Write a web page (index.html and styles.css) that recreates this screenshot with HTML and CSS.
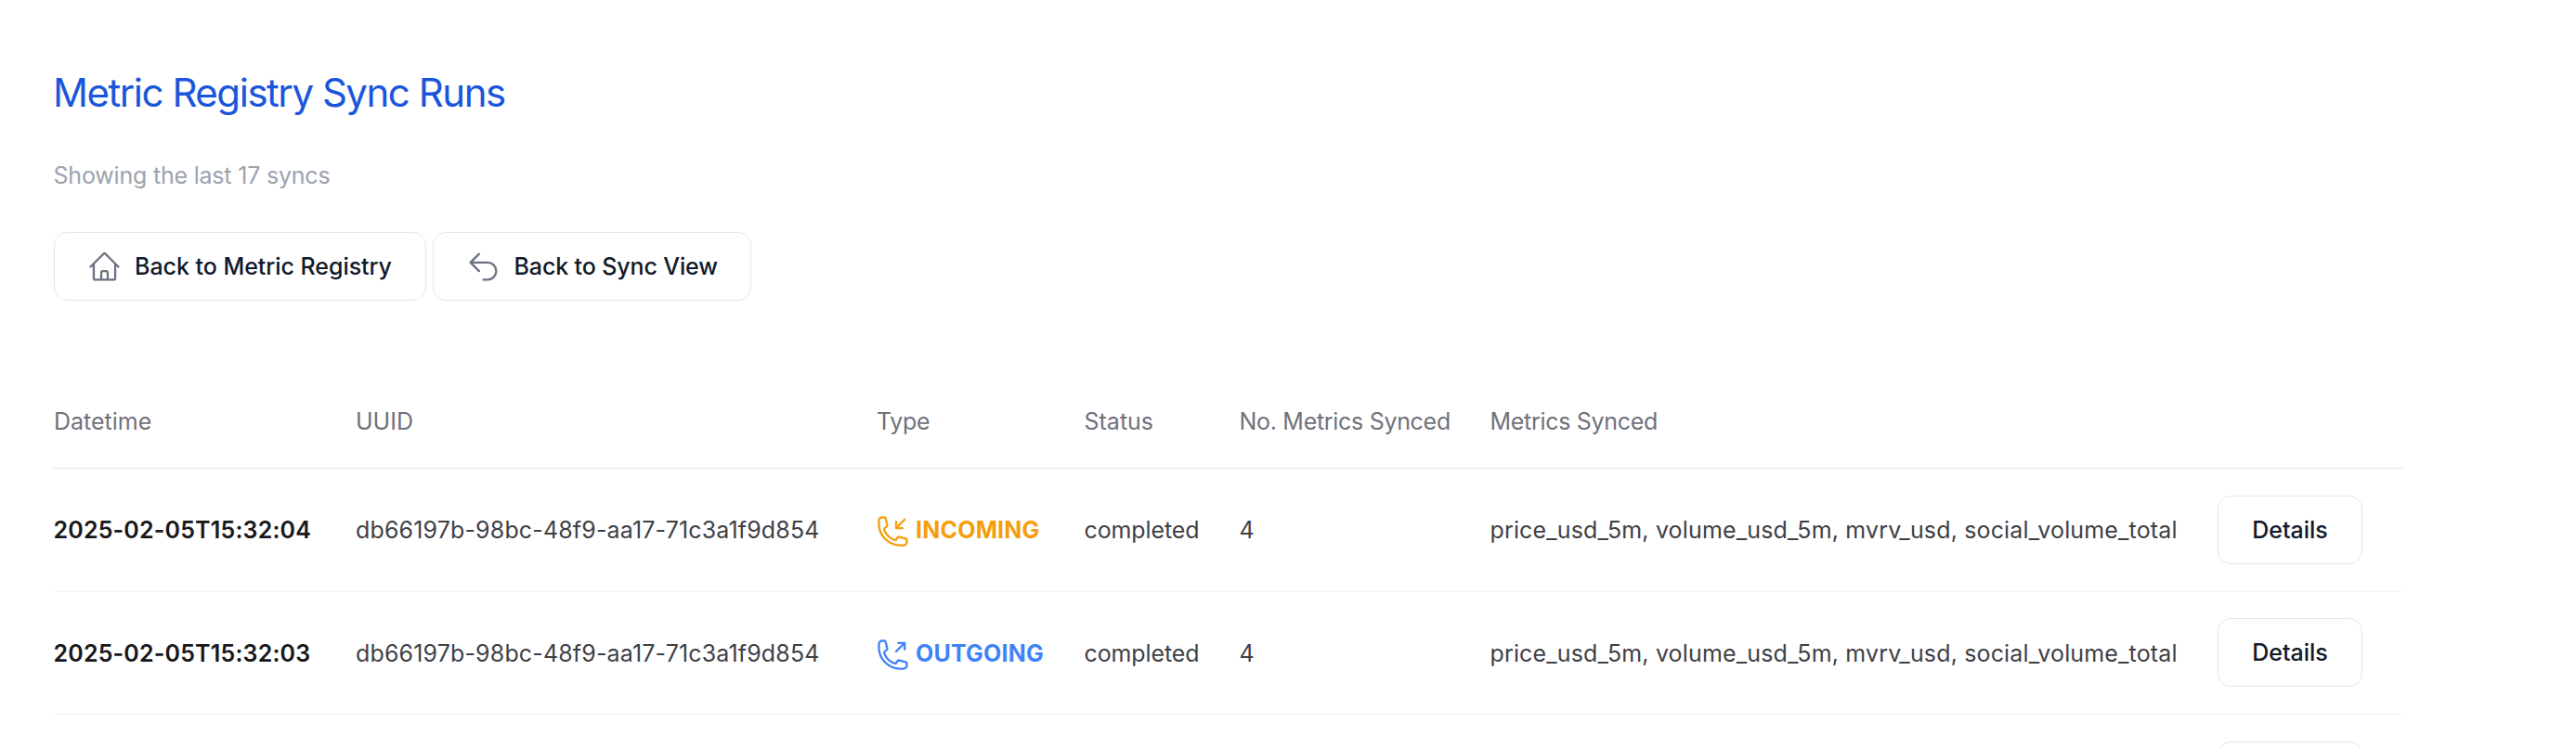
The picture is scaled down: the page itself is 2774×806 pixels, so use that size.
FILE: index.html
```
<!DOCTYPE html>
<html lang="en">
<head>
<meta charset="utf-8">
<title>Metric Registry Sync Runs</title>
<link rel="stylesheet" href="styles.css">
</head>
<body>
<main class="page">
  <h1 class="title">Metric Registry Sync Runs</h1>
  <p class="subtitle">Showing the last 17 syncs</p>
  <nav class="actions">
    <a class="btn btn-home">
      <svg class="icon" viewBox="0 0 24 24"><path d="m2.25 12 8.954-8.955c.44-.439 1.152-.439 1.591 0L21.75 12M4.5 9.75v10.125c0 .621.504 1.125 1.125 1.125H9.75v-4.875c0-.621.504-1.125 1.125-1.125h2.25c.621 0 1.125.504 1.125 1.125V21h4.125c.621 0 1.125-.504 1.125-1.125V9.75M8.25 21h8.25"/></svg>
      <span>Back to Metric Registry</span>
    </a>
    <a class="btn btn-sync">
      <svg class="icon" viewBox="0 0 24 24"><path d="M9 15 3 9m0 0 6-6M3 9h12a6 6 0 0 1 0 12h-3"/></svg>
      <span>Back to Sync View</span>
    </a>
  </nav>
  <section class="table">
    <div class="row head">
      <span>Datetime</span><span>UUID</span><span class="tight">Type</span><span>Status</span><span class="tight">No. Metrics Synced</span><span class="tight">Metrics Synced</span><span></span>
    </div>
    <div class="row run first">
      <span class="date">2025-02-05T15:32:04</span>
      <span class="wide">db66197b-98bc-48f9-aa17-71c3a1f9d854</span>
      <span class="type incoming">
        <svg class="icon" viewBox="0 0 24 24"><path d="M14.25 9.75v-4.5m0 4.5h4.5m-4.5 0 6-6m-3 18c-8.284 0-15-6.716-15-15V4.5A2.25 2.25 0 0 1 4.5 2.25h1.372c.516 0 .966.351 1.091.852l1.106 4.423c.11.44-.054.902-.417 1.173l-1.293.97a1.062 1.062 0 0 0-.38 1.21 12.035 12.035 0 0 0 7.143 7.143c.441.162.928-.004 1.21-.38l.97-1.293a1.125 1.125 0 0 1 1.173-.417l4.423 1.106c.5.125.852.575.852 1.091V19.5a2.25 2.25 0 0 1-2.25 2.25h-2.25Z"/></svg>
        <span>INCOMING</span>
      </span>
      <span class="status">completed</span>
      <span>4</span>
      <span class="wide">price_usd_5m, volume_usd_5m, mvrv_usd, social_volume_total</span>
      <a class="btn details">Details</a>
    </div>
    <div class="row run second">
      <span class="date">2025-02-05T15:32:03</span>
      <span class="wide">db66197b-98bc-48f9-aa17-71c3a1f9d854</span>
      <span class="type outgoing">
        <svg class="icon" viewBox="0 0 24 24"><path d="M20.25 3.75v4.5m0-4.5h-4.5m4.5 0-6 6m3 12c-8.284 0-15-6.716-15-15V4.5A2.25 2.25 0 0 1 4.5 2.25h1.372c.516 0 .966.351 1.091.852l1.106 4.423c.11.44-.054.902-.417 1.173l-1.293.97a1.062 1.062 0 0 0-.38 1.21 12.035 12.035 0 0 0 7.143 7.143c.441.162.928-.004 1.21-.38l.97-1.293a1.125 1.125 0 0 1 1.173-.417l4.423 1.106c.5.125.852.575.852 1.091V19.5a2.25 2.25 0 0 1-2.25 2.25h-2.25Z"/></svg>
        <span>OUTGOING</span>
      </span>
      <span class="status">completed</span>
      <span>4</span>
      <span class="wide">price_usd_5m, volume_usd_5m, mvrv_usd, social_volume_total</span>
      <a class="btn details">Details</a>
    </div>
    <div class="row run">
      <span></span><span></span><span></span><span></span><span></span><span></span>
      <a class="btn details"></a>
    </div>
  </section>
</main>
</body>
</html>
```
FILE: styles.css
```
* { box-sizing: border-box; }

body {
  margin: 0;
  background: #fff;
  font: 400 25px/38px Inter, sans-serif;
  color: #3f3f46;
}

.page {
  height: 806px;
  padding: 75px 58px 0;
  overflow: hidden;
}

.title {
  margin: 0 0 0 -1px;
  font-size: 42px;
  font-weight: 400;
  line-height: 50px;
  letter-spacing: -1.46px;
  color: #1a56db;
}

.subtitle {
  margin: 45px 0 42px -0.5px;
  letter-spacing: -0.2px;
  color: #9ca3af;
}

.actions { display: flex; gap: 7px; }

.btn {
  display: flex;
  align-items: center;
  height: 74px;
  border: 1px solid #e5e7eb;
  border-radius: 14px;
  font-weight: 500;
  color: #111928;
  white-space: nowrap;
}

.btn-home { width: 401px; padding-left: 35px; gap: 14px; letter-spacing: -0.04px; }
.btn-sync { width: 343px; padding-left: 35px; gap: 14.5px; letter-spacing: -0.12px; }
.btn .icon { color: #6b7280; }

.icon {
  flex: none;
  width: 37px;
  height: 37px;
  fill: none;
  stroke: currentColor;
  stroke-width: 1.5;
  stroke-linecap: round;
  stroke-linejoin: round;
}

.table { width: 2529px; padding-top: 111px; }

.row {
  display: grid;
  grid-template-columns: 325px 561px 223.5px 167px 270px 783.5px 156px;
  align-items: center;
  white-space: nowrap;
}

.head {
  height: 70px;
  align-items: start;
  border-bottom: 1px solid #e4e4e7;
  color: #71717a;
}

.head .tight { letter-spacing: -0.3px; }

.run {
  height: 132px;
  padding: 28px 0 29px;
  border-bottom: 1px solid #f4f4f5;
}

.first { height: 133px; padding-top: 29px; }
.second > span { padding-top: 2px; }

.date { margin-left: -0.5px; font-weight: 600; letter-spacing: 0.17px; color: #18181b; }
.wide { letter-spacing: 0.15px; }
.status { letter-spacing: -0.1px; }

.type {
  display: flex;
  align-items: center;
  gap: 6.5px;
  font-weight: 700;
  letter-spacing: 0.2px;
}

.type .icon { margin: 3px 0 0 -1.5px; }
.incoming { color: #f59e0b; }
.outgoing { color: #3f83f8; }

.details { justify-content: center; }
.run:last-child { padding-top: 29px; }
```
